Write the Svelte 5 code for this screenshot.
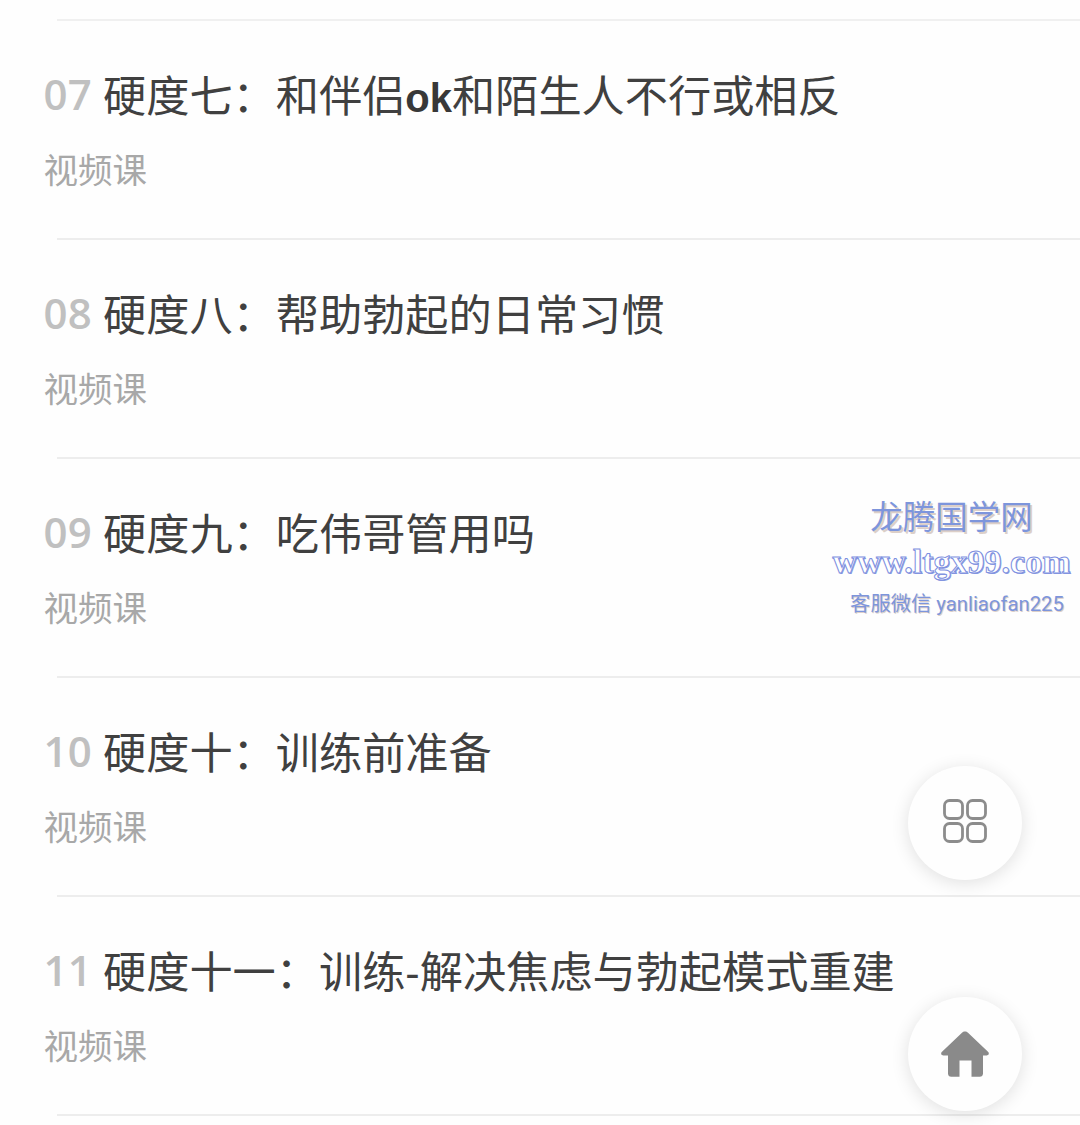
<script>
  const lessons = [
    { no: "07", title: "硬度七：和伴侣", bold: "ok", rest: "和陌生人不行或相反" },
    { no: "08", title: "硬度八：帮助勃起的日常习惯" },
    { no: "09", title: "硬度九：吃伟哥管用吗" },
    { no: "10", title: "硬度十：训练前准备" },
    { no: "11", title: "硬度十一：训练-解决焦虑与勃起模式重建" },
  ];
</script>

<div class="page">
  <div class="list">
    {#each lessons as lesson}
      <div class="row">
        <div class="title">
          <span class="no">{lesson.no}</span>
          <span class="name">{lesson.title}{#if lesson.bold}<b>{lesson.bold}</b>{lesson.rest}{/if}</span>
        </div>
        <div class="sub">视频课</div>
      </div>
    {/each}
  </div>

  <div class="mark">
    <div class="mark-name">龙腾国学网</div>
    <div class="mark-url">www.ltgx99.com</div>
    <div class="mark-wx">客服微信 yanliaofan225</div>
  </div>

  <div class="fab fab-grid">
    <svg width="44" height="44" viewBox="0 0 44 44" fill="none" stroke="#8c8c8c" stroke-width="2.800">
      <rect x="1.500" y="1.500" width="18" height="18" rx="5" />
      <rect x="24.500" y="1.500" width="18" height="18" rx="5" />
      <rect x="1.500" y="24.500" width="18" height="18" rx="5" />
      <rect x="24.500" y="24.500" width="18" height="18" rx="5" />
    </svg>
  </div>
  <div class="fab fab-home">
    <svg width="50" height="48" viewBox="0 0 50 48" fill="#8a8a8a">
      <path d="M25 1.500c1.200 0 2.200.5 3 1.300l20 19c1.600 1.600.7 3.700-1.400 3.700H43v18c0 2-1.300 3.300-3.300 3.300H31.500V30.500h-12v16.300h-8.200C9.300 46.800 8 45.500 8 43.500v-18H3.400C1.300 25.500.4 23.400 2 21.800l20-19c.8-.8 1.800-1.300 3-1.300z" />
    </svg>
  </div>
</div>

<style>
  :global(body) {
    margin: 0;
    background: #fefefe;
  }
  .page {
    position: relative;
    width: 1080px;
    height: 1125px;
    overflow: hidden;
    background: #fefefe;
    font-family: "Liberation Sans", "Noto Sans CJK SC", sans-serif;
  }
  .list {
    padding: 19px 0 0 43.500px;
  }
  .list::before {
    content: "";
    display: block;
    height: 2px;
    margin-left: 13.500px;
    background: #f0f0f0;
  }
  .row {
    box-sizing: border-box;
    height: 219px;
    padding-top: 44px;
    position: relative;
  }
  .row::after {
    content: "";
    position: absolute;
    left: 13.500px;
    right: 0;
    bottom: 0;
    height: 2px;
    background: #ededed;
  }
  .title {
    display: flex;
    align-items: center;
    height: 56px;
    color: #404040;
    font-size: 43.200px;
    white-space: nowrap;
  }
  .no {
    width: 59.500px;
    flex: none;
    color: #c0c0c0;
    font-size: 42px;
    font-weight: 600;
    font-family: "Open Sans", sans-serif;
    letter-spacing: 0.3px;
  }
  .name b {
    font-weight: 700;
    font-family: "Liberation Sans", sans-serif;
    font-size: 40px;
    color: #383838;
  }
  .sub {
    margin-top: 28px;
    color: #a8a8a8;
    font-size: 34.500px;
    line-height: 44px;
  }
  .mark {
    position: absolute;
    left: 820px;
    top: 497px;
    width: 260px;
    text-align: center;
    color: #7d95dc;
    white-space: nowrap;
  }
  .mark-name {
    font-size: 32.500px;
    line-height: 42px;
    margin-left: 3px;
    text-shadow: 2px 2px 0 #dccfc8;
  }
  .mark-url {
    font-family: "Liberation Serif", serif;
    font-size: 34px;
    font-weight: 700;
    line-height: 42px;
    margin-left: 3px;
    margin-top: 2px;
    color: #fff;
    -webkit-text-stroke: 1px #7d8fe0;
    text-shadow: 1px 1px 0 #8a9be0;
  }
  .mark-wx {
    font-size: 20.300px;
    font-family: "Roboto", "Noto Sans CJK SC", sans-serif;
    line-height: 30px;
    margin-left: 14px;
    margin-top: 6px;
    text-shadow: 1px 1px 0 #dccfc8;
  }
  .fab {
    position: absolute;
    left: 908px;
    width: 114px;
    height: 114px;
    border-radius: 50%;
    background: #fefefe;
    box-shadow: 0 3px 18px rgba(0, 0, 0, 0.12);
    display: flex;
    align-items: center;
    justify-content: center;
  }
  .fab-grid {
    top: 766px;
  }
  .fab-grid svg {
    margin-bottom: 4px;
  }
  .fab-home {
    top: 997px;
  }
</style>
